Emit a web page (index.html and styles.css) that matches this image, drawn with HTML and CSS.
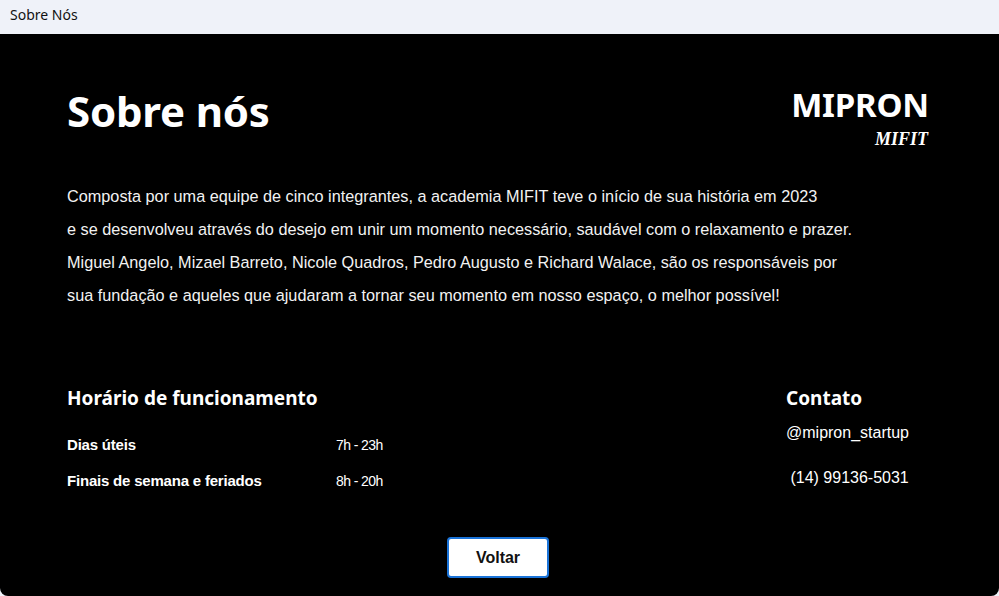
FILE: index.html
```html
<!DOCTYPE html>
<html lang="pt-BR">
<head>
<meta charset="utf-8">
<title>Sobre Nós</title>
<link rel="stylesheet" href="styles.css">
</head>
<body>
<div class="titlebar">Sobre Nós</div>
<main class="page">
  <header class="top">
    <h1 class="title">Sobre nós</h1>
    <div class="brand">
      <div class="brand-name">MIPRON</div>
      <div class="brand-sub">MIFIT</div>
    </div>
  </header>
  <p class="about">Composta por uma equipe de cinco integrantes, a academia MIFIT teve o início de sua história em 2023<br>e se desenvolveu através do desejo em unir um momento necessário, saudável com o relaxamento e prazer.<br>Miguel Angelo, Mizael Barreto, Nicole Quadros, Pedro Augusto e Richard Walace, são os responsáveis por<br>sua fundação e aqueles que ajudaram a tornar seu momento em nosso espaço, o melhor possível!</p>
  <section class="info">
    <div class="hours">
      <h2 class="sub">Horário de funcionamento</h2>
      <div class="row"><span class="day">Dias úteis</span><span class="time">7h - 23h</span></div>
      <div class="row"><span class="day">Finais de semana e feriados</span><span class="time">8h - 20h</span></div>
    </div>
    <div class="contact">
      <h2 class="sub">Contato</h2>
      <div class="handle">@mipron_startup</div>
      <div class="phone">&nbsp;(14) 99136-5031</div>
    </div>
  </section>
  <div class="actions"><button class="back">Voltar</button></div>
</main>
</body>
</html>
```

FILE: styles.css
```css
* { box-sizing: border-box; }
html, body { margin: 0; padding: 0; height: 100%; }
body {
  background: #eff2f9;
  display: flex;
  flex-direction: column;
  font-family: "Liberation Sans", Arial, sans-serif;
  overflow: hidden;
}
.titlebar {
  height: 34px;
  flex: none;
  padding-left: 10px;
  line-height: 30px;
  font-family: "Noto Sans", "Open Sans", sans-serif;
  font-size: 14px;
  color: #111;
  background: #eff2f9;
}
.page {
  flex: 1;
  background: #000;
  color: #fff;
  padding: 0 70px 0 67px;
  border-radius: 0 0 8px 8px;
  display: flex;
  flex-direction: column;
}
.top {
  display: flex;
  justify-content: space-between;
  align-items: flex-start;
  padding-top: 49px;
}
.title {
  margin: 0;
  font-family: "Noto Sans", "Open Sans", sans-serif;
  font-weight: 700;
  font-size: 42px;
  line-height: 56px;
  letter-spacing: -0.2px;
}
.brand { text-align: right; }
.brand-name {
  font-family: "Noto Sans", "Open Sans", sans-serif;
  font-weight: 700;
  font-size: 33px;
  line-height: 44px;
  letter-spacing: -0.2px;
}
.brand-sub {
  font-family: "Liberation Serif", "Times New Roman", serif;
  font-weight: 700;
  font-style: italic;
  font-size: 18px;
  line-height: 20px;
  margin-top: 2px;
  margin-right: 1px;
}
.about {
  margin: 31px 0 0;
  font-size: 16.25px;
  line-height: 33px;
  color: #f2f2f2;
}
.info {
  display: flex;
  justify-content: space-between;
  margin-top: 73px;
}
.sub {
  margin: 0;
  font-family: "Noto Sans", "Open Sans", sans-serif;
  font-weight: 700;
  font-size: 19px;
  line-height: 26px;
}
.hours .sub { margin-bottom: 16px; }
.row {
  display: flex;
  font-size: 15px;
  line-height: 36px;
  height: 36px;
}
.day { width: 269px; font-weight: 700; letter-spacing: -0.2px; }
.time { font-size: 14px; letter-spacing: -0.6px; }
.contact { width: 143px; font-size: 16px; }
.contact .sub { margin-bottom: 13px; }
.handle { line-height: 18px; }
.phone { line-height: 18px; margin-top: 27px; }
.actions {
  display: flex;
  justify-content: center;
  margin-top: 38px;
}
.back {
  width: 102px;
  height: 41px;
  background: #fff;
  border: 2px solid #1a73d8;
  border-radius: 4px;
  font-family: "Liberation Sans", Arial, sans-serif;
  font-weight: 700;
  font-size: 16px;
  color: #111;
}
```
